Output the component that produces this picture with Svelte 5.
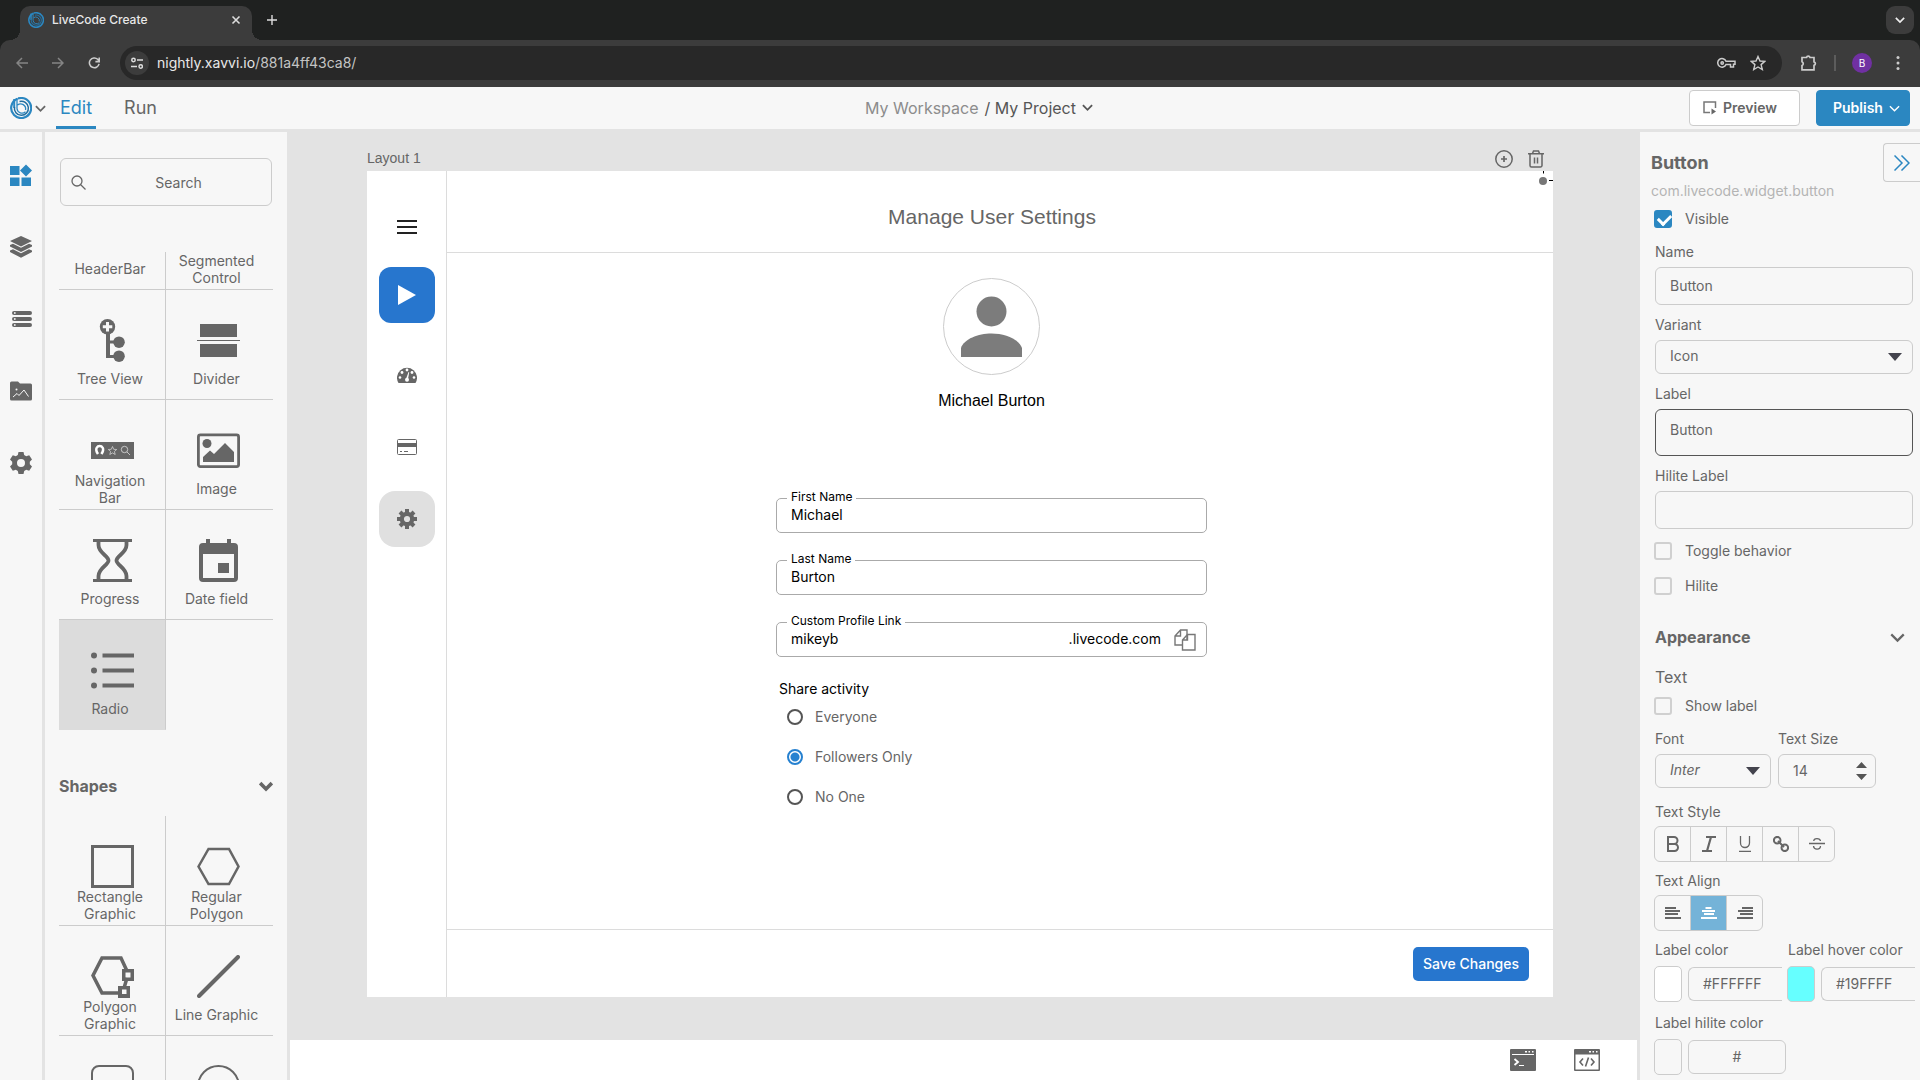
<script>
    let name = 'Button';
    let variant = 'Icon';
    let label = 'Button';
    let hiliteLabel = '';
    let visible = true;
    let font = 'Inter';
    let textSize = 14;
    let align = 'center';

    let firstName = 'Michael';
    let lastName = 'Burton';
    let profileLink = 'mikeyb';
    let share = 'Followers Only';
    const shareOptions = ['Everyone', 'Followers Only', 'No One'];

    // palette artwork, drawn in a 43x43 box
    const widgets = [
        {
            title: 'Tree View',
            art: '<circle cx="16.5" cy="7.7" r="7.7"/><path d="M15 14h4v7.500h6v3h-6V36h6v3H15z"/><circle cx="28" cy="23.200" r="5.800"/><circle cx="28" cy="37.200" r="5.800"/><path d="M16.500 3v9.500M11.800 7.700h9.500" stroke="#f7f7f7" stroke-width="3"/>'
        },
        {
            title: 'Divider',
            art: '<path d="M3 5h37v13H3zM3 25h37v13H3zM0 21h43v1H0z"/>'
        },
        {
            title: 'Navigation Bar',
            art: '<path d="M0 13h43v17H0z"/><path d="M7 25c-4-6 0-8 1.700-8s5.700 2 1.700 8" fill="none" stroke="#fff" stroke-width="2.500"/><path d="M21.500 17.500l1.200 2.800 3 .2-2.300 2 .8 3-2.700-1.600-2.700 1.600.8-3-2.300-2 3-.2z" fill="none" stroke="#ddd" stroke-width=".7"/><g fill="none" stroke="#ddd" stroke-width=".8"><circle cx="33.500" cy="20.500" r="3.200"/><path d="M36 23l3 3"/></g>'
        },
        {
            title: 'Image',
            art: '<rect x="1.400" y="5.900" width="40.200" height="31.700" rx="2" fill="none" stroke="currentColor" stroke-width="2.800"/><circle cx="10" cy="14.500" r="4.500"/><path d="M6 33v-5l7-6.500 4 3.500 11-11 9 9v10z"/>'
        },
        {
            title: 'Progress',
            art: '<path d="M2 0h39v3H2zM2 40h39v3H2z"/><path d="M7.500 3v3c0 8 10 11 10 15.500s-10 7.500-10 15.500v3M35.500 3v3c0 8-10 11-10 15.500s10 7.500 10 15.500v3" fill="none" stroke="currentColor" stroke-width="3.800"/>'
        },
        {
            title: 'Date field',
            art: '<path fill-rule="evenodd" d="M6 4h3V0h4v4h17V0h4v4h3a4 4 0 0 1 4 4v31a4 4 0 0 1-4 4H6a4 4 0 0 1-4-4V8a4 4 0 0 1 4-4zM6 15v24h31V15zM21 24h11v10H21z"/>'
        },
        {
            title: 'Radio',
            selected: true,
            art: '<circle cx="3" cy="6.500" r="3"/><circle cx="3" cy="21.500" r="3"/><circle cx="3" cy="36.500" r="3"/><path d="M11.500 4.500H43v4H11.500zM11.500 19.500H43v4H11.500zM11.500 34.500H43v4H11.500z"/>'
        }
    ];

    const shapes = [
        {
            title: 'Rectangle Graphic',
            art: '<rect x="1.500" y="1.500" width="40" height="40" fill="none" stroke="currentColor" stroke-width="3"/>'
        },
        {
            title: 'Regular Polygon',
            art: '<path d="M1.500 21.500L11.500 4H32l9.500 17.500L32 39H11.500z" fill="none" stroke="currentColor" stroke-width="2.500"/>'
        },
        {
            title: 'Polygon Graphic',
            art: '<path d="M36 16L30 3H11L2 20.500 11 38h20M36 23l-3 10" fill="none" stroke="currentColor" stroke-width="3.500"/><path fill-rule="evenodd" d="M31 14h12v12H31zM34.500 17.500v5h5v-5zM27 31h12v12H27zM31 34.500v4.500h4.500v-4.500z"/>'
        },
        {
            title: 'Line Graphic',
            art: '<path d="M2 41L41 2" stroke="currentColor" stroke-width="4" stroke-linecap="round"/>'
        },
        {
            art: '<rect x="1" y="1" width="41" height="41" rx="7" fill="none" stroke="currentColor" stroke-width="2"/>'
        },
        {
            art: '<circle cx="21.500" cy="21.500" r="20.500" fill="none" stroke="currentColor" stroke-width="2"/>'
        }
    ];

    const rail = [
        {
            title: 'Widgets',
            art: '<path d="M0 2h9.500v9H0zM0 13.500h9.500v9H0zM11.500 13.500h9.500v9h-9.500zM16 .5l6 6-6 6-6-6z"/>'
        },
        {
            title: 'Layers',
            art: '<path d="M11 0l11 5-11 5.500L0 5zM0 9l3-1.300 8 4 8-4L22 9v1.500l-11 5.500-11-5.500zM0 14.500l3-1.300 8 4 8-4 3 1.300V16l-11 5.800L0 16z"/>'
        },
        {
            title: 'Lists',
            art: '<path d="M4 3h16a2 2 0 0 1 0 4H4a2 2 0 0 1 0-4zM4 9h16a2 2 0 0 1 0 4H4a2 2 0 0 1 0-4zM4 15h16a2 2 0 0 1 0 4H4a2 2 0 0 1 0-4z"/><path d="M4 4.200h1.600v1.600H4zM4 10.200h1.600v1.600H4zM4 16.200h1.600v1.600H4z" fill="#fff"/>'
        },
        {
            title: 'Assets',
            art: '<path d="M1.500 1.500h6.500l2 2h10.500a1.500 1.500 0 0 1 1.500 1.500v14a1.500 1.500 0 0 1-1.500 1.500h-19A1.500 1.500 0 0 1 0 19V3a1.500 1.500 0 0 1 1.500-1.500z"/><path d="M3 17l4-3.500 2 2 5-5.500 4.500 6.500" fill="none" stroke="#f7f7f7"/><circle cx="6.500" cy="9.500" r="1" fill="#f7f7f7"/>'
        },
        {
            title: 'Settings',
            art: '<path fill-rule="evenodd" d="M8.500 0h5l.7 3 2 1.200 3-.9L22 7.500l-2.200 2.200v2.600L22 14.500l-2.800 4.200-3-.9-2 1.200-.7 3h-5l-.7-3-2-1.200-3 .9L0 14.500l2.200-2.200V9.700L0 7.500l2.800-4.200 3 .9 2-1.200zM11 7a4 4 0 1 0 0 8 4 4 0 0 0 0-8z"/>'
        }
    ];

    const textStyles = [
        {
            title: 'Bold',
            art: '<path d="M3 1h6a3.500 3.500 0 0 1 0 7H3zM3 8h6.500a3.500 3.500 0 0 1 0 7H3z" fill="none" stroke="currentColor" stroke-width="2"/>'
        },
        {
            title: 'Italic',
            art: '<path d="M5 1h10M1 15h10M10 1L6 15" fill="none" stroke="currentColor" stroke-width="2.200"/>'
        },
        {
            title: 'Underline',
            art: '<path d="M3.500 0v7a4.500 4.500 0 0 0 9 0V0M2 15.500h12" fill="none" stroke="currentColor" stroke-width="1.300"/>'
        },
        {
            title: 'Link',
            art: '<g fill="none" stroke="currentColor" stroke-width="2"><circle cx="4.200" cy="4.200" r="3.300"/><circle cx="11.800" cy="11.800" r="3.300"/><path d="M5 5l6 6"/></g>'
        },
        {
            title: 'Strikethrough',
            art: '<path d="M0 7.500h16M11.500 5C11 2 5 1.500 4.700 5M4.500 10c.5 4.500 7 4 7 0" fill="none" stroke="currentColor" stroke-width="1.300"/>'
        }
    ];

    const aligns = [
        { id: 'left', art: '<path d="M0 2h11v2H0zM0 5h15v2H0zM0 8h13v2H0zM0 12h16v2H0z"/>' },
        { id: 'center', art: '<path d="M4.500 2h6v2h-6zM1 5h13v2H1zM3 8h10v2H3zM0 12h16v2H0z"/>' },
        { id: 'right', art: '<path d="M5 2h11v2H5zM1 5h15v2H1zM3 8h13v2H3zM0 12h16v2H0z"/>' }
    ];
</script>

{#snippet logo(size)}
    <svg width={size} height={size} viewBox="0 0 22 22" fill="none" stroke="#2b87c1">
        <path d="M7.500 1.700A10 10 0 1 0 11 1L8 1.400" stroke-width="2.200"/>
        <path d="M4.200 2v9" stroke-width="2"/>
        <path d="M7 1v10.500a5 5 0 0 0 8.500 3.200M7.500 8A5 5 0 0 1 15.500 13" stroke-width="1.300"/>
        <path d="M4.500 10a7 7 0 1 0 5-5.500" stroke="#226e9f" stroke-width="1.500"/>
    </svg>
{/snippet}

{#snippet chevron(width, stroke)}
    <svg class="chevron" {width} height={width} viewBox="0 0 12 12" fill="none" stroke="currentColor" stroke-width={stroke}>
        <path d="M1 3.500l5 5 5-5"/>
    </svg>
{/snippet}

{#snippet cell(item)}
    <button class="cell" class:cell--selected={item.selected}>
        <svg width="43" height="43" viewBox="0 0 43 43" fill="currentColor">{@html item.art}</svg>
        {#if item.title}
            <span class="cell__title">{item.title}</span>
        {/if}
    </button>
{/snippet}

<div class="page">
    <header class="browser">
        <div class="tabs">
            <div class="tab">
                {@render logo(16)}
                <span class="tab__title">LiveCode Create</span>
                <button class="plain" aria-label="Close tab">
                    <svg width="10" height="10" viewBox="0 0 10 10" fill="none" stroke="#ddd" stroke-width="1.600"><path d="M1.500 1.500l7 7M8.500 1.500l-7 7"/></svg>
                </button>
            </div>
            <button class="plain tabs__new" aria-label="New tab">
                <svg width="10" height="10" viewBox="0 0 10 10" stroke="#ddd" stroke-width="1.400"><path d="M5 0v10M0 5h10"/></svg>
            </button>
            <button class="tabs__search" aria-label="Search tabs">{@render chevron(10, 2)}</button>
        </div>
        <div class="toolbar">
            <button class="plain" aria-label="Back">
                <svg width="12" height="12" viewBox="0 0 12 12" fill="none" stroke="#858585" stroke-width="1.500"><path d="M12 6H1M6 1L1 6l5 5"/></svg>
            </button>
            <button class="plain" aria-label="Forward">
                <svg width="12" height="12" viewBox="0 0 12 12" fill="none" stroke="#858585" stroke-width="1.500"><path d="M0 6h11M6 1l5 5-5 5"/></svg>
            </button>
            <button class="plain" aria-label="Reload">
                <svg width="12" height="14" viewBox="0 0 13 14" fill="none" stroke="#ccc" stroke-width="1.700"><path d="M12 8A5.300 5.300 0 1 1 10.500 3l1.500 1.700M12.200 1v4.500H8"/></svg>
            </button>
            <div class="address">
                <span class="address__info">
                    <svg width="12" height="12" viewBox="0 0 12 12" fill="none" stroke="#ddd" stroke-width="1.500"><circle cx="2.500" cy="3" r="1.700"/><path d="M6 3h6M0 9.500h6"/><circle cx="9.700" cy="9.500" r="1.700"/></svg>
                </span>
                <span class="address__url">nightly.xavvi.io<span class="address__path">/881a4ff43ca8/</span></span>
                <button class="plain" aria-label="Passwords">
                    <svg width="19" height="12" viewBox="0 0 19 12" fill="none" stroke="#ccc" stroke-width="1.500"><path d="M9 4.200h9v3h-1.500V10h-3V7.500H9A4.300 4.300 0 1 1 9 4.200z"/><circle cx="5.200" cy="6" r="1.200"/></svg>
                </button>
                <button class="plain" aria-label="Bookmark this tab">
                    <svg width="16" height="16" viewBox="0 0 16 16" fill="none" stroke="#ccc" stroke-width="1.400"><path d="M8 1.500l2 4.500 4.800.4-3.700 3.200 1.200 4.900L8 12l-4.300 2.500 1.200-4.900L1.200 6.400 6 6z"/></svg>
                </button>
            </div>
            <button class="plain" aria-label="Extensions">
                <svg width="18" height="18" viewBox="0 0 18 18" fill="none" stroke="#ccc" stroke-width="1.700"><path d="M2 3.500h4.500a1.800 1.800 0 0 1 3.500 0h4v4.300a1.800 1.800 0 0 1 0 3.500v4.500H2v-4.300a2 2 0 0 0 0-3.700z"/></svg>
            </button>
            <span class="toolbar__line"></span>
            <span class="toolbar__user">B</span>
            <button class="plain" aria-label="Menu">
                <svg width="4" height="14" viewBox="0 0 4 14" fill="#ccc"><circle cx="2" cy="1.500" r="1.500"/><circle cx="2" cy="7" r="1.500"/><circle cx="2" cy="12.500" r="1.500"/></svg>
            </button>
        </div>
    </header>

    <div class="topbar">
        <nav class="topbar__left">
            <button class="plain topbar__logo" aria-label="LiveCode menu">{@render logo(22)}{@render chevron(11, 2)}</button>
            <a class="mode mode--active" href="#edit">Edit</a>
            <a class="mode" href="#run">Run</a>
        </nav>
        <div class="crumbs">
            <span class="crumbs__parent">My Workspace</span>
            <span>/ My Project</span>
            {@render chevron(11, 2)}
        </div>
        <div class="topbar__right">
            <button class="preview">
                <svg width="14" height="14" viewBox="0 0 14 14" fill="none" stroke="#777" stroke-width="1.500"><path d="M7 11.500H1V1h11.500v6"/><path d="M8.500 7.500l4.500 3-4.500 3z" fill="#666" stroke="none"/></svg>
                Preview
            </button>
            <button class="publish">Publish {@render chevron(11, 1.5)}</button>
        </div>
    </div>

    <main class="workspace">
        <nav class="rail">
            {#each rail as item, i}
                <button class="rail__item" class:rail__item--active={i === 0} aria-label={item.title}>
                    <svg width="22" height="22" viewBox="0 0 22 22" fill="currentColor">{@html item.art}</svg>
                </button>
            {/each}
        </nav>

        <aside class="palette">
            <label class="search">
                <svg width="15" height="15" viewBox="0 0 15 15" fill="none" stroke="currentColor" stroke-width="1.300"><circle cx="6" cy="6" r="5"/><path d="M9.500 9.500l5 5"/></svg>
                <input type="text" placeholder="Search" aria-label="Search">
            </label>
            <div class="palette__grid">
                <button class="cell cell--cut"><span class="cell__title">HeaderBar</span></button>
                <button class="cell cell--cut"><span class="cell__title">Segmented Control</span></button>
                {#each widgets as item}
                    {@render cell(item)}
                {/each}
            </div>
            <h2 class="palette__heading">Shapes {@render chevron(14, 3)}</h2>
            <div class="palette__grid">
                {#each shapes as item}
                    {@render cell(item)}
                {/each}
            </div>
        </aside>

        <section class="stage">
            <div class="stage__canvas">
                <div class="stage__head">
                    <span class="stage__name">Layout 1</span>
                    <button class="plain" aria-label="Add layout">
                        <svg width="18" height="18" viewBox="0 0 18 18" fill="none" stroke="#666" stroke-width="1.500"><circle cx="9" cy="9" r="8.200"/><path d="M9 6v6M6 9h6" stroke-width="1.700"/></svg>
                    </button>
                    <button class="plain" aria-label="Delete layout">
                        <svg width="16" height="18" viewBox="0 0 16 18" fill="none" stroke="#666" stroke-width="1.500"><path d="M0 3.700h16M4.500 3.500L5.500 1h5l1 2.500M2 4v11.500A1.500 1.500 0 0 0 3.500 17h9a1.500 1.500 0 0 0 1.500-1.500V4M6.500 7.500v6M9.500 7.500v6"/></svg>
                    </button>
                </div>

                <div class="artboard">
                    <nav class="side">
                        <button class="side__item" aria-label="Menu">
                            <svg width="20" height="14" viewBox="0 0 20 14" fill="#222"><path d="M0 0h20v2H0zM0 6h20v2H0zM0 12h20v2H0z"/></svg>
                        </button>
                        <button class="side__item side__item--play" aria-label="Play">
                            <svg width="18" height="20" viewBox="0 0 18 20" fill="#fff"><path d="M0 0l18 10L0 20z"/></svg>
                        </button>
                        <button class="side__item side__item--dash" aria-label="Dashboard">
                            <svg width="20" height="16" viewBox="0 0 20 16" fill="currentColor"><path d="M1.500 16a10 10 0 1 1 17 0z"/><g fill="#fff"><circle cx="3" cy="10.500" r="1.300"/><circle cx="5" cy="5.500" r="1.400"/><circle cx="10" cy="3" r="1.400"/><circle cx="15" cy="5.500" r="1.400"/><circle cx="17" cy="10.500" r="1.300"/><circle cx="10" cy="12.800" r="2"/><path d="M9 12l2.500-7 .7.200-1.200 7z"/></g></svg>
                        </button>
                        <button class="side__item" aria-label="Billing">
                            <svg width="20" height="16" viewBox="0 0 20 16" fill="currentColor"><rect x=".5" y=".5" width="19" height="15" rx="1" fill="none" stroke="currentColor"/><path d="M0 4h20v4H0zM3 12h2v1H3zM7 12h4v1H7z"/></svg>
                        </button>
                        <button class="side__item side__item--on" aria-label="Settings">
                            <svg width="20" height="20" viewBox="0 0 20 20" fill="none" stroke="currentColor"><circle cx="10" cy="10" r="5.200" stroke-width="4.200"/><path d="M10 0v4M10 16v4M0 10h4M16 10h4M3 3l3 3M14 14l3 3M17 3l-3 3M6 14l-3 3" stroke-width="4"/></svg>
                        </button>
                    </nav>

                    <div class="screen">
                        <h1 class="screen__title">Manage User Settings</h1>
                        <form class="screen__body" on:submit|preventDefault>
                            <div class="avatar">
                                <svg width="61" height="61" viewBox="0 0 61 61" fill="#7c7c7c"><circle cx="30.500" cy="15.500" r="15"/><path d="M0 61V52c3-9 17-14.500 30.500-14.500S58 43 61 52v9z"/></svg>
                            </div>
                            <p class="screen__name">Michael Burton</p>
                            <div class="fields">
                                <div class="outlined">
                                    <label for="first">First Name</label>
                                    <input id="first" type="text" bind:value={firstName}>
                                </div>
                                <div class="outlined">
                                    <label for="last">Last Name</label>
                                    <input id="last" type="text" bind:value={lastName}>
                                </div>
                                <div class="outlined">
                                    <label for="link">Custom Profile Link</label>
                                    <input id="link" type="text" bind:value={profileLink}>
                                    <span class="outlined__suffix">.livecode.com</span>
                                    <button type="button" class="plain" aria-label="Copy link">
                                        <svg width="22" height="22" viewBox="0 0 22 22" fill="#fff" stroke="#777" stroke-width="1.400"><path d="M1 7L6.500 1H13v15H1zM1 7h5.500V1"/><path d="M8.500 11l5-5.500H21V21H8.500zM8.500 11h5V5.500"/></svg>
                                    </button>
                                </div>
                            </div>
                            <fieldset class="share">
                                <legend>Share activity</legend>
                                {#each shareOptions as option}
                                    <label class="share__option">
                                        <input type="radio" name="share" value={option} bind:group={share}>
                                        {option}
                                    </label>
                                {/each}
                            </fieldset>
                        </form>
                        <div class="screen__footer">
                            <button class="save">Save Changes</button>
                        </div>
                    </div>

                    <svg class="handle" width="14" height="14" viewBox="0 0 14 14"><circle cx="4" cy="10" r="4" fill="#777"/><path d="M4.500 0v2.500M10 9.500h4" stroke="#000"/></svg>
                </div>
            </div>

            <div class="console">
                <button class="plain" aria-label="Console">
                    <svg width="26" height="22" viewBox="0 0 26 22"><rect width="26" height="22" rx="1" fill="#666"/><path d="M2 5.500h22M9 16.500h5" stroke="#fff"/><path d="M4.500 10l3.500 3-3.500 3" fill="none" stroke="#fff" stroke-width="1.800"/><path d="M15 2h2v1.500h-2zM18.500 2h1.500v1.500h-1.500zM22 2h1.500v1.500H22z" fill="#fff"/></svg>
                </button>
                <button class="plain" aria-label="Code">
                    <svg width="26" height="22" viewBox="0 0 26 22"><rect width="26" height="22" rx="1" fill="#666"/><path d="M1.500 5.500h23v15h-23z" fill="#fff"/><path d="M9 9.500L6 13l3 3.500M17 9.500l3 3.500-3 3.500M14.500 8.500l-3 9" fill="none" stroke="#666" stroke-width="1.600"/><path d="M15 2h2v1.500h-2zM18.500 2h1.500v1.500h-1.500zM22 2h1.500v1.500H22z" fill="#fff"/></svg>
                </button>
            </div>
        </section>

        <aside class="props">
            <div class="props__head">
                <h2>Button</h2>
                <button class="collapse" aria-label="Collapse panel">
                    <svg width="16" height="16" viewBox="0 0 16 16" fill="none" stroke="#2b87c1" stroke-width="1.500"><path d="M.5.5L8 8 .5 15.500M7.500.5L15 8l-7.500 7.500"/></svg>
                </button>
            </div>
            <p class="props__id">com.livecode.widget.button</p>

            <label class="check"><input type="checkbox" bind:checked={visible}>Visible</label>
            <div class="props__group">
                <div class="prop">
                    <label for="p-name">Name</label>
                    <input id="p-name" class="box box--tall" type="text" bind:value={name}>
                </div>
                <div class="prop">
                    <label for="p-variant">Variant</label>
                    <div class="pick">
                        <select id="p-variant" class="box" bind:value={variant}>
                            <option>Icon</option>
                            <option>Text</option>
                        </select>
                        <span class="pick__arrow"></span>
                    </div>
                </div>
                <div class="prop">
                    <label for="p-label">Label</label>
                    <textarea id="p-label" class="box box--area" bind:value={label}></textarea>
                </div>
                <div class="prop">
                    <label for="p-hilite">Hilite Label</label>
                    <input id="p-hilite" class="box box--tall" type="text" bind:value={hiliteLabel}>
                </div>
                <div class="checks">
                    <label class="check"><input type="checkbox">Toggle behavior</label>
                    <label class="check"><input type="checkbox">Hilite</label>
                </div>
            </div>

            <h3 class="props__section">Appearance {@render chevron(15, 1.8)}</h3>
            <h4 class="props__sub">Text</h4>
            <label class="check"><input type="checkbox">Show label</label>

            <div class="pair">
                <div class="prop prop--font">
                    <label for="p-font">Font</label>
                    <div class="pick">
                        <select id="p-font" class="box box--italic" bind:value={font}>
                            <option>Inter</option>
                            <option>Roboto</option>
                        </select>
                        <span class="pick__arrow"></span>
                    </div>
                </div>
                <div class="prop prop--size">
                    <label for="p-size">Text Size</label>
                    <div class="pick">
                        <input id="p-size" class="box" type="number" bind:value={textSize}>
                        <svg class="pick__spin" width="11" height="18" viewBox="0 0 11 18" fill="#555"><path d="M0 6l5.500-6L11 6zM0 12h11l-5.500 6z"/></svg>
                    </div>
                </div>
            </div>

            <div class="prop prop--toggles">
                <span>Text Style</span>
                <div class="toggles">
                    {#each textStyles as style}
                        <button aria-label={style.title}><svg width="16" height="16" viewBox="0 0 16 16" fill="currentColor">{@html style.art}</svg></button>
                    {/each}
                </div>
            </div>
            <div class="prop prop--toggles">
                <span>Text Align</span>
                <div class="toggles">
                    {#each aligns as item}
                        <button aria-label="Align {item.id}" class:on={align === item.id} on:click={() => (align = item.id)}><svg width="16" height="16" viewBox="0 0 16 16" fill="currentColor">{@html item.art}</svg></button>
                    {/each}
                </div>
            </div>

            <div class="colors">
                <div class="prop">
                    <label for="c-label">Label color</label>
                    <div class="color">
                        <button class="swatch swatch--white" aria-label="Pick label color"></button>
                        <input id="c-label" class="box box--open" type="text" value="#FFFFFF">
                    </div>
                </div>
                <div class="prop">
                    <label for="c-hover">Label hover color</label>
                    <div class="color">
                        <button class="swatch swatch--cyan" aria-label="Pick label hover color"></button>
                        <input id="c-hover" class="box box--open" type="text" value="#19FFFF">
                    </div>
                </div>
                <div class="prop prop--closed">
                    <label for="c-hilite">Label hilite color</label>
                    <div class="color">
                        <button class="swatch" aria-label="Pick label hilite color"></button>
                        <input id="c-hilite" class="box box--center" type="text" value="#">
                    </div>
                </div>
            </div>
        </aside>
    </main>
</div>

<style>
    :global(body) {
        margin: 0;
    }

    .page {
        display: flex;
        flex-direction: column;
        height: 100vh;
        overflow: hidden;
        background: #e3e3e3;
        color: #666;
        font: 14px/20px Inter, "Liberation Sans", sans-serif;
    }

    .page :global(*) {
        box-sizing: border-box;
    }

    svg {
        display: block;
        flex: none;
    }

    h1, h2, h3, h4, p {
        margin: 0;
    }

    button, input, select, textarea {
        margin: 0;
        font: inherit;
        color: inherit;
        outline: none;
    }

    .plain {
        display: flex;
        align-items: center;
        padding: 0;
        border: none;
        background: none;
    }

    /* browser chrome */
    .browser {
        flex: none;
        background: #1f2120;
    }

    .tabs {
        display: flex;
        align-items: center;
        height: 40px;
        padding: 6px 6px 0 20px;
    }

    .tab {
        position: relative;
        display: flex;
        align-items: center;
        gap: 8px;
        width: 232px;
        height: 34px;
        padding: 0 11px 6px 8px;
        border-radius: 10px 10px 0 0;
        background: #3c3c3c;
        color: #e8e8e8;
        font-size: 12px;
        font-weight: 500;
    }

    .tab::before,
    .tab::after {
        content: '';
        position: absolute;
        bottom: 0;
        width: 10px;
        height: 10px;
    }

    .tab::before {
        right: 100%;
        background: radial-gradient(circle at 0 0, transparent 10px, #3c3c3c 10px);
    }

    .tab::after {
        left: 100%;
        background: radial-gradient(circle at 100% 0, transparent 10px, #3c3c3c 10px);
    }

    .tab__title {
        flex: 1;
    }

    .tabs__new {
        margin: 0 auto 6px 15px;
    }

    .tabs__search {
        display: grid;
        place-items: center;
        width: 28px;
        height: 28px;
        margin-bottom: 6px;
        border: none;
        border-radius: 9px;
        background: #3c3c3c;
        color: #eee;
    }

    .toolbar {
        display: flex;
        align-items: center;
        gap: 24px;
        height: 47px;
        padding: 0 20px 1px 16px;
        border-radius: 10px 10px 0 0;
        background: #3c3c3c;
    }

    .address {
        display: flex;
        flex: 1;
        align-items: center;
        gap: 14px;
        height: 34px;
        margin: 0 -6px 0 -4px;
        padding: 0 16px 0 5px;
        border-radius: 17px;
        background: #282828;
    }

    .address__info {
        display: grid;
        place-items: center;
        width: 24px;
        height: 24px;
        border-radius: 50%;
        background: #3c3c3c;
    }

    .address__url {
        flex: 1;
        margin-left: -6px;
        color: #e8e8e8;
    }

    .address__path {
        color: #c4c4c4;
    }

    .toolbar__line {
        width: 2px;
        height: 16px;
        margin: 0 -8px;
        background: #5c5c5c;
    }

    .toolbar__user {
        width: 20px;
        height: 20px;
        border-radius: 50%;
        background: #7030a2;
        color: #fff;
        font-size: 10px;
        text-align: center;
    }

    /* app bar */
    .topbar {
        display: grid;
        grid-template-columns: 1fr auto 1fr;
        flex: none;
        height: 45px;
        padding: 0 10px;
        border-bottom: 3px solid #e3e3e3;
        background: #f7f7f7;
    }

    .topbar__left {
        display: flex;
        gap: 24px;
    }

    .topbar__logo {
        gap: 3px;
        margin-right: -14px;
    }

    .mode {
        padding: 11px 4px 8px;
        color: inherit;
        font-size: 18px;
        text-decoration: none;
    }

    .mode--active {
        border-bottom: 3px solid #2b87c1;
        color: #2b87c1;
    }

    .crumbs {
        display: flex;
        align-items: center;
        gap: 6px;
        padding: 0 0 1px 38px;
        color: #555;
        font-size: 16px;
    }

    .crumbs__parent {
        color: #8c8c8c;
    }

    .topbar__right {
        display: flex;
        align-items: center;
        justify-content: flex-end;
        gap: 16px;
    }

    .preview,
    .publish {
        display: flex;
        align-items: center;
        gap: 6px;
        height: 36px;
        border: 1px solid #ccc;
        border-radius: 4px;
        background: #fff;
        font-weight: 600;
    }

    .preview {
        width: 111px;
        padding: 0 13px;
    }

    .publish {
        width: 94px;
        padding: 0 8px 0 16px;
        border-color: #2b87c1;
        background: #2b87c1;
        color: #fff;
    }

    /* columns */
    .workspace {
        display: flex;
        flex: 1;
        min-height: 0;
    }

    .rail {
        display: flex;
        flex-direction: column;
        align-items: center;
        gap: 50px;
        width: 42px;
        margin-right: 3px;
        padding-top: 32px;
        background: #f7f7f7;
    }

    .rail__item {
        padding: 0;
        border: none;
        background: none;
    }

    .rail__item--active {
        color: #2b87c1;
    }

    .palette {
        flex: none;
        width: 242px;
        padding: 26px 14px 0;
        overflow: hidden;
        background: #f7f7f7;
    }

    .search {
        display: flex;
        align-items: center;
        height: 48px;
        margin: 0 1px 46px;
        padding: 1px 0 0 10px;
        border: 1px solid #ccc;
        border-radius: 6px;
    }

    .search input {
        flex: 1;
        min-width: 0;
        border: none;
        background: none;
        text-align: center;
    }

    .search input::placeholder {
        color: #666;
    }

    .palette__grid {
        display: grid;
        grid-template-columns: 1fr 1fr;
    }

    .cell {
        display: flex;
        flex-direction: column;
        align-items: center;
        height: 110px;
        padding: 29px 0 0;
        border: solid #ccc;
        border-width: 0 0 1px;
        background: none;
    }

    .cell:nth-child(odd) {
        border-right-width: 1px;
    }

    .cell:nth-child(even) {
        padding-right: 2px;
    }

    .cell--cut {
        height: 38px;
        padding-top: 0;
    }

    .cell--selected {
        border-bottom-color: #dcdcdc;
        background: #dcdcdc;
    }

    .cell__title {
        display: flex;
        align-items: center;
        justify-content: center;
        width: 88px;
        height: 34px;
        margin-right: 4px;
        padding-bottom: 1px;
        line-height: 17px;
        text-align: center;
    }

    .palette__heading {
        display: flex;
        align-items: center;
        justify-content: space-between;
        height: 20px;
        margin: 46px 0 20px;
        font-size: 16px;
        font-weight: 700;
    }

    /* stage */
    .stage {
        display: flex;
        flex: 1;
        flex-direction: column;
        min-width: 0;
    }

    .stage__canvas {
        display: flex;
        flex: 1;
        flex-direction: column;
        padding: 14px 87px 43px 80px;
    }

    .stage__head {
        display: flex;
        align-items: center;
        gap: 15px;
        height: 25px;
        padding-right: 9px;
    }

    .stage__name {
        flex: 1;
        padding-bottom: 2px;
        font-family: "Liberation Sans", sans-serif;
    }

    .artboard {
        position: relative;
        display: flex;
        flex: 1;
        background: #fff;
    }

    .handle {
        position: absolute;
        top: 0;
        right: 0;
    }

    .side {
        display: flex;
        flex-direction: column;
        align-items: center;
        gap: 16px;
        width: 80px;
        padding-top: 28px;
        border-right: 1px solid #dcdcdc;
    }

    .side__item {
        display: grid;
        place-items: center;
        width: 56px;
        height: 56px;
        padding: 0;
        border: none;
        border-radius: 12px;
        background: none;
    }

    .side__item--play {
        margin: -4px 0 8px;
        background: #2776ce;
    }

    .side__item--on {
        border-radius: 16px;
        background: #e0e0e0;
    }

    .screen {
        display: flex;
        flex: 1;
        flex-direction: column;
    }

    .screen__title {
        height: 82px;
        padding: 34px 16px 0 0;
        border-bottom: 1px solid #dcdcdc;
        font: 21px/24px "Liberation Sans", sans-serif;
        text-align: center;
    }

    .screen__body {
        display: flex;
        flex: 1;
        flex-direction: column;
        align-items: center;
        padding: 25px 17px 0 0;
        color: #000;
    }

    .avatar {
        display: grid;
        place-items: center;
        width: 97px;
        height: 97px;
        border: 1px solid #ccc;
        border-radius: 50%;
    }

    .screen__name {
        margin: 16px 0 87px;
        font: 16px/20px "Liberation Sans", sans-serif;
    }

    .fields {
        display: grid;
        gap: 27px;
        width: 431px;
    }

    .outlined {
        position: relative;
        display: flex;
        align-items: center;
        gap: 13px;
        height: 35px;
        padding: 0 10px 0 14px;
        border: 1px solid #aaa;
        border-radius: 5px;
    }

    .outlined label {
        position: absolute;
        top: -9px;
        left: 10px;
        padding: 0 4px;
        background: #fff;
        font-size: 12px;
        line-height: 14px;
    }

    .outlined input {
        flex: 1;
        min-width: 0;
        padding: 0 0 2px;
        border: none;
        background: none;
    }

    .outlined__suffix {
        padding-bottom: 2px;
    }

    .share {
        width: 425px;
        margin: 22px 0 0;
        padding: 0;
        border: none;
    }

    .share legend {
        margin-bottom: 8px;
        padding: 0;
    }

    .share__option {
        display: flex;
        align-items: center;
        gap: 12px;
        margin: 0 0 20px 8px;
        color: #666;
    }

    .share__option input {
        width: 16px;
        height: 16px;
        border: 2px solid #555;
        border-radius: 50%;
        appearance: none;
    }

    .share__option input:checked {
        border-color: #2681d0;
        background: radial-gradient(circle, #2681d0 4px, #fff 5px);
    }

    .screen__footer {
        display: flex;
        align-items: flex-start;
        justify-content: flex-end;
        height: 68px;
        padding: 17px 24px 0 0;
        border-top: 1px solid #dcdcdc;
    }

    .save {
        width: 116px;
        height: 34px;
        padding: 0;
        border: none;
        border-radius: 5px;
        background: #2776ce;
        color: #fff;
        font-weight: 500;
    }

    .console {
        display: flex;
        align-items: center;
        justify-content: flex-end;
        gap: 38px;
        height: 40px;
        margin: 0 3px;
        padding-right: 37px;
        background: #fff;
    }

    /* properties */
    .props {
        flex: none;
        width: 280px;
        padding: 11px 0 0 15px;
        overflow: hidden;
        background: #f7f7f7;
    }

    .props__head {
        display: flex;
        align-items: center;
        justify-content: space-between;
        margin-left: -4px;
    }

    .props__head h2 {
        font-size: 18px;
        font-weight: 700;
    }

    .collapse {
        display: grid;
        place-items: center;
        width: 37px;
        height: 39px;
        padding: 0;
        border: 1px solid #ccc;
        border-right: none;
        border-radius: 4px 0 0 4px;
        background: none;
    }

    .props__id {
        margin: -1px 0 8px -4px;
        color: #b4b4b4;
    }

    .props__group {
        display: grid;
        gap: 10px;
        margin: 13px 7px 0 0;
    }

    .check {
        display: flex;
        align-items: center;
        gap: 13px;
        height: 20px;
        margin-left: -1px;
    }

    .check input {
        position: relative;
        width: 18px;
        height: 18px;
        border: 2px solid #d0d0d0;
        border-radius: 3px;
        appearance: none;
    }

    .check input:checked {
        border-color: #2b87c1;
        background: #2b87c1;
    }

    .check input:checked::after {
        content: '';
        position: absolute;
        top: 0;
        left: 4px;
        width: 6px;
        height: 10px;
        border: solid #fff;
        border-width: 0 3px 3px 0;
        transform: rotate(45deg);
    }

    .checks {
        display: grid;
        gap: 15px;
        padding-top: 2px;
    }

    .prop {
        display: grid;
        gap: 5px;
    }

    .box {
        width: 100%;
        height: 34px;
        padding: 0 14px 2px;
        border: 1px solid #ccc;
        border-radius: 6px;
        background: none;
        appearance: none;
    }

    .box--tall {
        height: 38px;
    }

    .box--area {
        display: block;
        height: 47px;
        padding-top: 10px;
        border-color: #555;
        resize: none;
    }

    .box--italic {
        font-style: italic;
    }

    .box--open {
        border-right: none;
        border-radius: 6px 0 0 6px;
    }

    .box--center {
        text-align: center;
    }

    .box::-webkit-inner-spin-button {
        appearance: none;
    }

    .pick {
        position: relative;
    }

    .pick__arrow {
        position: absolute;
        top: 13px;
        right: 11px;
        border: solid transparent;
        border-width: 8px 7px 0;
        border-top-color: #43434d;
        pointer-events: none;
    }

    .pick__spin {
        position: absolute;
        top: 8px;
        right: 9px;
        pointer-events: none;
    }

    .props__section {
        display: flex;
        align-items: center;
        justify-content: space-between;
        height: 20px;
        margin: 31px 15px 20px 0;
        font-size: 16px;
        font-weight: 700;
    }

    .props__sub {
        height: 20px;
        margin-bottom: 9px;
        font-size: 16px;
        font-weight: 400;
    }

    .pair {
        display: flex;
        gap: 7px;
        margin: 13px 0 14px;
    }

    .prop--font {
        width: 116px;
    }

    .prop--size {
        width: 98px;
    }

    .prop--toggles {
        gap: 4px;
        margin-bottom: 9px;
    }

    .toggles {
        display: flex;
        justify-self: start;
        height: 36px;
        margin-left: -1px;
        overflow: hidden;
        border: 1px solid #ccc;
        border-radius: 6px;
    }

    .toggles button {
        display: grid;
        place-items: center;
        width: 36px;
        padding: 0;
        border: none;
        border-left: 1px solid #ccc;
        background: none;
    }

    .toggles button:first-child {
        width: 35px;
        border-left: none;
    }

    .toggles button.on {
        background: #74b3d8;
        color: #fff;
    }

    .colors {
        display: grid;
        grid-template-columns: 127px 127px;
        gap: 10px 6px;
    }

    .color {
        display: flex;
        align-items: center;
        gap: 6px;
        height: 38px;
        margin-left: -1px;
    }

    .color .box {
        flex: 1;
        min-width: 0;
    }

    .prop--closed {
        margin-right: -4px;
    }

    .swatch {
        width: 28px;
        height: 36px;
        padding: 0;
        border: 1px solid #ccc;
        border-radius: 5px;
        background: none;
    }

    .swatch--white {
        background: #fff;
    }

    .swatch--cyan {
        background: #66ffff;
    }
</style>
